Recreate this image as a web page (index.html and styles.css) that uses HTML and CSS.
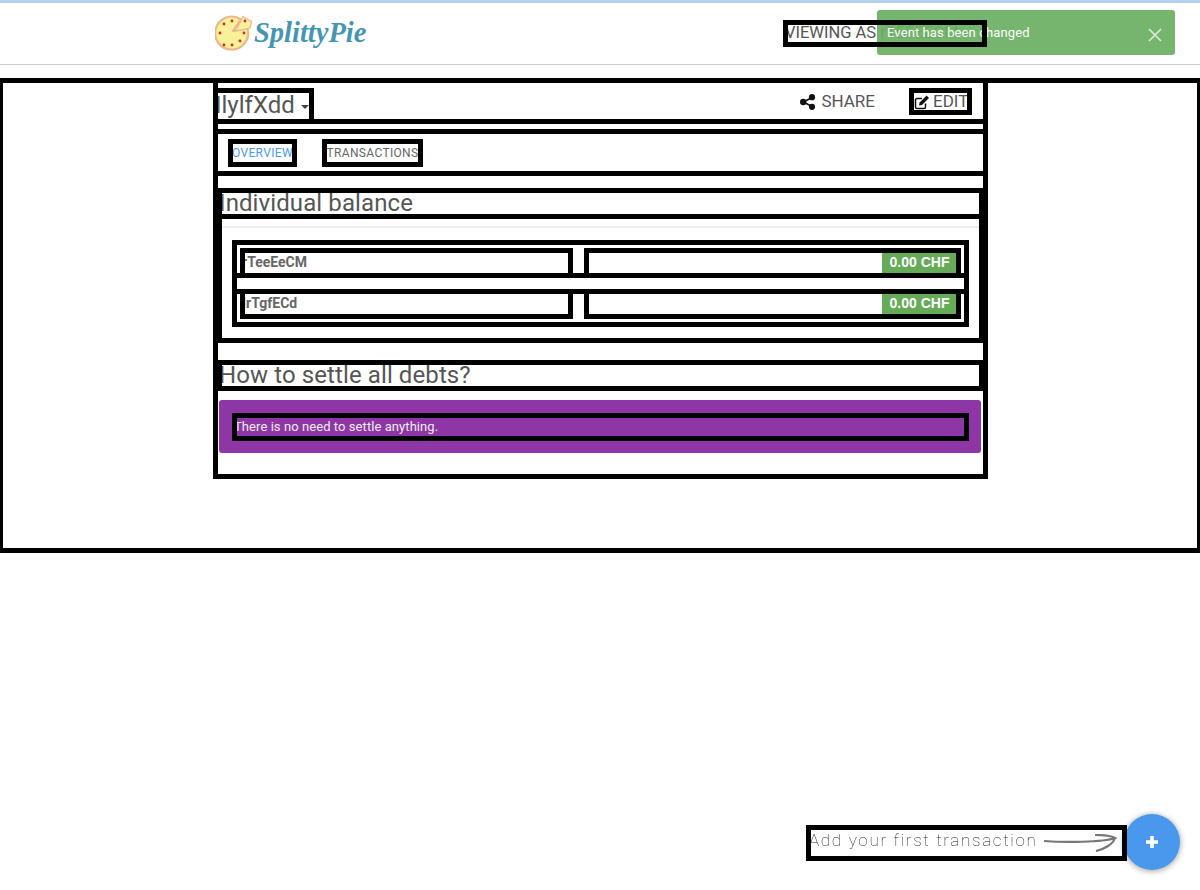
FILE: index.html
```html
<!DOCTYPE html>
<html lang="en">
  <head>
    <meta charset="UTF-8" />
    <meta name="viewport" content="width=device-width, initial-scale=1.0" />
    <title>SplittyPie</title>
    <link rel="stylesheet" href="styles.css">
  </head>
  <body>
    <div class="top-stripe"></div>

    <header class="navbar">
      <div class="navbar-inner">
        <a class="logo">
          <svg class="logo-pizza" width="38" height="36" viewBox="0 0 38 36">
            <path d="M18 16 L26 4.5 A16.5 16.5 0 1 0 32.5 13.5 Z" fill="#f9f09a" stroke="#e6bb8c" stroke-width="2.2" stroke-linejoin="round" />
            <path d="M21 16 L28 1.5 L36.5 6.5 L35 13 Z" fill="#f9f09a" stroke="#e6bb8c" stroke-width="1.2" stroke-linejoin="round" />
            <circle cx="9" cy="9" r="1.4" fill="#d8262c" />
            <circle cx="17" cy="6" r="1.4" fill="#d8262c" />
            <circle cx="5" cy="18" r="1.4" fill="#d8262c" />
            <circle cx="9" cy="30" r="1.4" fill="#d8262c" />
            <circle cx="17" cy="30" r="1.4" fill="#d8262c" />
            <circle cx="25" cy="26" r="1.4" fill="#d8262c" />
            <circle cx="29" cy="18" r="1.4" fill="#d8262c" />
            <circle cx="30" cy="6" r="1.4" fill="#d8262c" />
          </svg>
          <span class="logo-text">SplittyPie</span>
        </a>
        <div class="viewing-as">VIEWING AS rTEEEECM <span class="caret"></span></div>
      </div>
    </header>

    <main class="page box">
      <div class="container box">
        <div class="event-head box">
          <div class="event-name box">IlylfXdd <span class="caret"></span></div>
          <div class="event-actions">
            <a class="action">
              <svg width="16" height="16" viewBox="0 0 16 16">
                <path d="M3.5 8 L12 3.5 M3.5 8 L12 12.5" stroke="#111" stroke-width="1.6" />
                <circle cx="3.2" cy="8" r="3.2" fill="#111" />
                <circle cx="12" cy="3.2" r="3.1" fill="#111" />
                <circle cx="12" cy="12.8" r="3.1" fill="#111" />
              </svg>
              SHARE
            </a>
            <a class="action action-edit box">
              <svg width="16" height="16" viewBox="0 0 16 16">
                <path d="M11.5 9.5 V13 A1.5 1.5 0 0 1 10 14.5 H3 A1.5 1.5 0 0 1 1.5 13 V6 A1.5 1.5 0 0 1 3 4.5 H8" fill="none" stroke="#111" stroke-width="1.5" />
                <path d="M5 11.5 L5.6 8.6 L12.6 1.6 L15 4 L8 11 Z" fill="#111" />
              </svg>
              EDIT
            </a>
          </div>
        </div>

        <nav class="tabs box">
          <a class="tab tab-active box">OVERVIEW</a>
          <a class="tab box">TRANSACTIONS</a>
        </nav>

        <h2 class="section-title box">Individual balance</h2>
        <div class="panel box">
          <hr class="rule" />
          <div class="balances box">
            <div class="balance-row">
              <div class="balance-name box">rTeeEeCM</div>
              <div class="balance-value box"><span class="badge">0.00 CHF</span></div>
            </div>
            <div class="balance-gap"></div>
            <div class="balance-row">
              <div class="balance-name box">IrTgfECd</div>
              <div class="balance-value box"><span class="badge">0.00 CHF</span></div>
            </div>
          </div>
        </div>

        <h2 class="section-title section-title-debts box">How to settle all debts?</h2>
        <div class="callout">
          <div class="callout-text box">There is no need to settle anything.</div>
        </div>
      </div>
    </main>

    <!-- notification and floating button sit over the page -->
    <div class="notification">
      <span>Event has been changed</span>
      <svg class="notification-close" width="14" height="14" viewBox="0 0 14 14">
        <path d="M1 1 L13 13 M13 1 L1 13" stroke="#d9ecd5" stroke-width="1.6" />
      </svg>
    </div>

    <button class="fab">
      <svg width="14" height="14" viewBox="0 0 14 14">
        <path d="M7 1 V13 M1 7 H13" stroke="#fff" stroke-width="3.6" />
      </svg>
    </button>

    <div class="fab-hint box">
      <span class="fab-hint-text">Add your first transaction</span>
      <svg class="fab-hint-arrow" width="74" height="18" viewBox="0 0 74 18">
        <path d="M1 7 C20 8.5 60 8.5 72 4 C68 2 60 1 52 1 M72 4 C70 10 62 15 53 17" fill="none" stroke="#777" stroke-width="2.2" />
      </svg>
    </div>
  </body>
</html>
```

FILE: styles.css
```css
body {
  margin: 0;
  min-height: 100vh;
  font-family: Roboto, sans-serif;
  background-color: #fff;
  color: #444;
}

/* black debug frames, drawn over the content they belong to */
.box {
  outline: 5px solid #000;
  outline-offset: -3px;
}

.top-stripe {
  height: 3px;
  background-color: #b5d0ef;
}

.navbar {
  height: 62px;
  box-sizing: border-box;
  border-bottom: 1px solid #ccc;
}

.navbar-inner {
  width: 770px;
  height: 60px;
  margin-left: 215px;
  display: flex;
  align-items: center;
  justify-content: space-between;
}

.logo {
  display: flex;
  align-items: center;
  gap: 1px;
}

.logo-text {
  font-family: "Liberation Serif", serif;
  font-style: italic;
  font-weight: bold;
  font-size: 28.5px;
  color: #4596b2;
}

.viewing-as {
  position: relative;
  width: 200px;
  height: 23px;
  line-height: 21px;
  font-size: 16.5px;
  color: #555;
  white-space: nowrap;
}

.viewing-as::after {
  content: "";
  position: absolute;
  inset: -2px;
  border: 5px solid #000;
  z-index: 10;
}

.caret {
  display: inline-block;
  width: 0;
  height: 0;
  vertical-align: middle;
  border-top: 4px solid #444;
  border-left: 4px solid transparent;
  border-right: 4px solid transparent;
}

.page {
  margin-top: 15px;
  height: 471px;
}

.container {
  width: 771px;
  height: 397px;
  margin-left: 215px;
}

.event-head {
  height: 42px;
  display: flex;
  justify-content: space-between;
  align-items: flex-start;
}

.event-name {
  width: 97px;
  height: 32px;
  margin-top: 10px;
  line-height: 30px;
  font-size: 24px;
  color: #555;
  white-space: nowrap;
}

.event-actions {
  display: flex;
  align-items: flex-start;
  gap: 36px;
  margin: 10px 16px 0 0;
}

.action {
  display: flex;
  align-items: center;
  gap: 5px;
  height: 23px;
  box-sizing: border-box;
  padding-bottom: 2px;
  font-size: 17px;
  color: #555;
}

.action svg {
  margin-top: 2px;
}

.action-edit {
  width: 59px;
  padding-left: 3px;
  gap: 3px;
}

.tabs {
  height: 43px;
  box-sizing: border-box;
  margin-top: 9px;
  padding: 10px 0 0 15px;
  display: flex;
  gap: 29px;
}

.tab {
  height: 24px;
  line-height: 24px;
  font-size: 12px;
  letter-spacing: 0.35px;
  color: #666;
  text-align: center;
  width: 97px;
}

.tab-active {
  width: 65px;
  color: #4a9aee;
}

.section-title {
  height: 27px;
  line-height: 26px;
  margin: 16px 4px 0;
  font-size: 24px;
  font-weight: 400;
  letter-spacing: 0.1px;
  color: #555;
}

.section-title-debts {
  margin-top: 21px;
}

.panel {
  height: 125px;
  margin: -1px 4px 0;
  padding: 10px 15px 0;
  box-sizing: border-box;
}

.rule {
  height: 0;
  margin: 0 -15px 14px;
  border: 0;
  border-top: 2px solid #eee;
}

.balances {
  height: 83px;
  box-sizing: border-box;
  padding: 8px;
}

.balance-row {
  display: flex;
  gap: 15px;
}

.balance-name {
  width: 329px;
  height: 26px;
  line-height: 24px;
  font-size: 14px;
  font-weight: bold;
  color: #666;
}

.balance-value {
  flex: 1;
  height: 26px;
  box-sizing: border-box;
  padding: 3px;
  display: flex;
  justify-content: flex-end;
}

.badge {
  width: 74px;
  height: 20px;
  box-sizing: border-box;
  padding-left: 1px;
  line-height: 18px;
  text-align: center;
  font-family: "Liberation Sans", sans-serif;
  font-size: 14px;
  font-weight: bold;
  color: #fff;
  background-color: #65ab58;
}

.balance-gap {
  height: 11px;
  margin: -3px -5px;
  border-top: 5px solid #000;
  border-bottom: 5px solid #000;
}

.callout {
  margin: 11px 5px 0 4px;
  padding: 15px 14px 14px 15px;
  background-color: #8e36a6;
  border-radius: 3px;
}

.callout-text {
  height: 24px;
  line-height: 23px;
  font-size: 13px;
  letter-spacing: 0.07px;
  color: #eee;
}

.notification {
  position: fixed;
  top: 10px;
  left: 877px;
  width: 298px;
  height: 45px;
  box-sizing: border-box;
  padding: 0 13px 0 10px;
  display: flex;
  align-items: center;
  justify-content: space-between;
  background-color: #6cb064;
  opacity: 0.93;
  border-radius: 3px;
  font-size: 13px;
  letter-spacing: 0.1px;
  color: #fff;
  z-index: 5;
}

.notification-close {
  margin-top: 5px;
}

.fab {
  position: fixed;
  left: 1124px;
  top: 814px;
  width: 56px;
  height: 56px;
  padding: 0;
  border: none;
  border-radius: 50%;
  background-color: #4a97ee;
  box-shadow: 0 1px 6px rgba(0, 0, 0, 0.4);
  display: flex;
  align-items: center;
  justify-content: center;
}

.fab-hint {
  position: fixed;
  left: 808px;
  top: 827px;
  width: 317px;
  height: 32px;
  display: flex;
  align-items: center;
  gap: 4px;
  white-space: nowrap;
}

.fab-hint-text {
  width: 230px;
  margin-top: -6px;
  padding-left: 1px;
  font-weight: 100;
  font-size: 17px;
  letter-spacing: 1.7px;
  color: #222;
}
```
